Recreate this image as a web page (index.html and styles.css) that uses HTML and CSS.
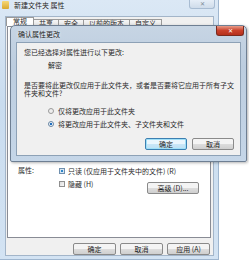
FILE: index.html
```html
<!DOCTYPE html>
<html lang="zh-CN">
  <head>
    <meta charset="UTF-8" />
    <title>新建文件夹 属性</title>
    <link rel="stylesheet" href="styles.css">
  </head>
  <body>
    <div class="screen">
      <!-- back window: folder properties -->
      <div class="window">
        <div class="titlebar">
          <span class="folder-icon"></span>
          <span class="title">新建文件夹 属性</span>
          <span class="close-btn">✕</span>
        </div>
        <div class="client">
          <div class="tabs">
            <span class="tab active">常规</span>
            <span class="tab">共享</span>
            <span class="tab">安全</span>
            <span class="tab">以前的版本</span>
            <span class="tab">自定义</span>
          </div>
          <div class="panel">
            <div class="attr-row">
              <span class="attr-label">属性:</span>
              <div class="attr-options">
                <div class="check"><span class="box partial"></span>只读 (仅应用于文件夹中的文件) (R)</div>
                <div class="check-line">
                  <div class="check"><span class="box"></span>隐藏 (H)</div>
                  <span class="btn adv">高级 (D)...</span>
                </div>
              </div>
            </div>
          </div>
          <div class="footer">
            <span class="btn">确定</span>
            <span class="btn">取消</span>
            <span class="btn">应用 (A)</span>
          </div>
        </div>
      </div>

      <!-- front dialog: confirm attribute changes -->
      <div class="dialog">
        <div class="dlg-title">
          <span>确认属性更改</span>
          <span class="dlg-close">✕</span>
        </div>
        <div class="dlg-client">
          <p class="line">您已经选择对属性进行以下更改:</p>
          <p class="line change">解密</p>
          <p class="question">是否要将此更改仅应用于此文件夹，或者是否要将它应用于所有子文件夹和文件?</p>
          <div class="radios">
            <div class="radio"><span class="dot"></span>仅将更改应用于此文件夹</div>
            <div class="radio"><span class="dot on"></span>将更改应用于此文件夹、子文件夹和文件</div>
          </div>
          <div class="dlg-buttons">
            <span class="btn default">确定</span>
            <span class="btn">取消</span>
          </div>
        </div>
      </div>
    </div>
  </body>
</html>
```

FILE: styles.css
```css
* {
  margin: 0;
  padding: 0;
  box-sizing: border-box;
}

body {
  background-color: white;
  font-family: "Noto Sans CJK SC", "Noto Sans", sans-serif;
  font-size: 7px;
  color: #2a2a2a;
}

.screen {
  position: relative;
  width: 249px;
  height: 261px;
  overflow: hidden;
}

/* back window */
.window {
  width: 219px;
  height: 260px;
  padding: 0 4px 3px 5px;
  background: linear-gradient(to bottom, #dbe8f5, #c9dcef 40%, #d3e3f3);
  border-right: 1px solid #9fb6cf;
  border-bottom: 1px solid #9fb6cf;
  display: flex;
  flex-direction: column;
}

.titlebar {
  height: 17px;
  display: flex;
  align-items: center;
  gap: 5px;
  position: relative;
  margin-left: -3px;
}

.folder-icon {
  width: 7px;
  height: 8px;
  margin-top: -6px;
  background: linear-gradient(to bottom, #f6d877, #d9a82e);
  border-radius: 1px;
}

.title {
  margin-top: -6px;
  color: #1e1e1e;
  text-shadow: 0 0 3px white;
}

.close-btn {
  position: absolute;
  right: -1px;
  top: 0;
  width: 26px;
  height: 9px;
  border: 1px solid #a8bcd2;
  border-top: none;
  border-radius: 0 0 3px 3px;
  background: linear-gradient(to bottom, #e6eef7, #cfdcea);
  color: #7d8a98;
  font-size: 6px;
  line-height: 8px;
  text-align: center;
}

.client {
  flex: 1;
  background-color: #f0f0f0;
  border: 1px solid #a3b5c9;
  padding-top: 1px;
  display: flex;
  flex-direction: column;
}

.tabs {
  display: flex;
  height: 8px;
  margin-left: 1px;
  align-items: flex-end;
}

.tab {
  padding: 0 5px;
  height: 7px;
  line-height: 7px;
  border: 1px solid #9a9a9a;
  border-bottom: none;
  background: linear-gradient(to bottom, #f6f6f6, #e4e4e4);
  margin-left: -1px;
}

.tab.active {
  height: 9px;
  background: white;
  padding: 0 6px;
}

.panel {
  height: 212px;
  margin: 0 2px 0 1px;
  background-color: white;
  border: 1px solid #898c95;
  padding: 137px 10px 0 10px;
}

.attr-row {
  display: flex;
}

.attr-label {
  width: 41px;
  line-height: 13px;
}

.attr-options {
  flex: 1;
}

.check {
  display: flex;
  align-items: center;
  gap: 3px;
  height: 13px;
}

.box {
  width: 6px;
  height: 6px;
  border: 1px solid #8f8f8f;
  background: linear-gradient(to bottom right, #dcdcdc, #f8f8f8);
}

.box.partial {
  border-color: #6f8fae;
  background: #2f86c8;
  box-shadow: inset 0 0 0 1px #d6e6f3;
}

.check-line {
  display: flex;
  justify-content: space-between;
  align-items: flex-start;
  padding-right: 1px;
}

.btn {
  display: inline-block;
  height: 12px;
  line-height: 10px;
  text-align: center;
  border: 1px solid #8a8a8a;
  border-radius: 2px;
  background: linear-gradient(to bottom, #f4f4f4 45%, #dcdcdc 55%, #cfcfcf);
  color: #222;
}

.adv {
  width: 52px;
  margin-top: 5px;
}

.footer {
  display: flex;
  justify-content: flex-end;
  gap: 4px;
  margin-top: 5px;
  padding-right: 3px;
}

.footer .btn {
  width: 43px;
}

/* front dialog */
.dialog {
  position: absolute;
  left: 10px;
  top: 25px;
  width: 237px;
  height: 137px;
  padding: 0 5px 5px 5px;
  background: linear-gradient(to bottom, #c7d5e4, #bccddf 30%, #c5d6e8);
  border: 1px solid #6e7f93;
  border-radius: 5px 5px 2px 2px;
  box-shadow: 1px 1px 3px rgba(0, 0, 0, 0.3);
  display: flex;
  flex-direction: column;
}

.dlg-title {
  height: 16px;
  display: flex;
  align-items: center;
  padding-left: 2px;
  position: relative;
  color: #1a1a1a;
  text-shadow: 0 0 3px white;
}

.dlg-close {
  position: absolute;
  right: -3px;
  top: 0;
  width: 28px;
  height: 10px;
  border: 1px solid #7a2a1e;
  border-top: none;
  border-radius: 0 0 3px 3px;
  background: linear-gradient(to bottom, #e89c8a, #c9412b 50%, #b5301c);
  color: white;
  font-size: 6px;
  line-height: 9px;
  text-align: center;
  text-shadow: none;
}

.dlg-client {
  flex: 1;
  background-color: #f0f0f0;
  border: 1px solid #8da1b6;
  padding: 5px 6px 0 7px;
  line-height: 8px;
}

.change {
  padding-left: 24px;
  margin-top: 5px;
}

.question {
  margin-top: 12px;
}

.radios {
  margin-top: 7px;
  padding-left: 24px;
}

.radio {
  display: flex;
  align-items: center;
  gap: 4px;
  height: 13px;
}

.dot {
  width: 6px;
  height: 6px;
  border-radius: 50%;
  border: 1px solid #9a9a9a;
  background: #eeeeee;
}

.dot.on {
  border-color: #6a86a3;
  background: radial-gradient(circle, #1f6fbf 40%, #e9f1f8 50%);
}

.dlg-buttons {
  display: flex;
  justify-content: flex-end;
  gap: 5px;
  margin-top: 8px;
}

.dlg-buttons .btn {
  width: 42px;
}

.btn.default {
  border-color: #3c7fb1;
  box-shadow: inset 0 0 0 1px #9fe0f8;
  background: linear-gradient(to bottom, #eaf6fd 45%, #c8e6f7 55%, #bde0f4);
}
```
